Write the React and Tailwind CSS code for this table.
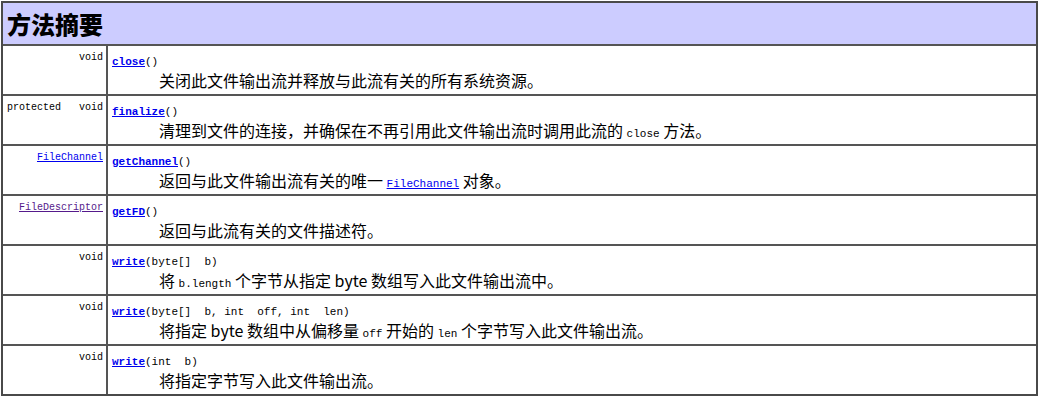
const MONO = "font-['Liberation_Mono','DejaVu_Sans_Mono',monospace]";

function Code({ children }) {
  return <span className={`${MONO} text-[11px]`}>{children}</span>;
}

const rows = [
  {
    left: 'void',
    name: 'close',
    params: '()',
    desc: <>关闭此文件输出流并释放与此流有关的所有系统资源。</>,
  },
  {
    left: 'protected   void',
    name: 'finalize',
    params: '()',
    desc: (
      <>
        清理到文件的连接，并确保在不再引用此文件输出流时调用此流的 <Code>close</Code> 方法。
      </>
    ),
  },
  {
    left: <a className="text-[#0000ee] underline">FileChannel</a>,
    name: 'getChannel',
    params: '()',
    desc: (
      <>
        返回与此文件输出流有关的唯一 <a className={`${MONO} text-[11px] text-[#0000ee] underline`}>FileChannel</a> 对象。
      </>
    ),
  },
  {
    left: <a className="text-[#551a8b] underline">FileDescriptor</a>,
    name: 'getFD',
    params: '()',
    desc: <>返回与此流有关的文件描述符。</>,
  },
  {
    left: 'void',
    name: 'write',
    params: '(byte[]  b)',
    desc: (
      <>
        将 <Code>b.length</Code> 个字节从指定 byte 数组写入此文件输出流中。
      </>
    ),
  },
  {
    left: 'void',
    name: 'write',
    params: '(byte[]  b, int  off, int  len)',
    desc: (
      <>
        将指定 byte 数组中从偏移量 <Code>off</Code> 开始的 <Code>len</Code> 个字节写入此文件输出流。
      </>
    ),
  },
  {
    left: 'void',
    name: 'write',
    params: '(int  b)',
    desc: <>将指定字节写入此文件输出流。</>,
  },
];

export default function App() {
  return (
    <div className="bg-white w-[1039px] h-[397px] pt-px pl-px font-['Noto_Sans_CJK_SC',sans-serif] text-black">
      <div className="w-[1037px] border-2 border-[#4a4a4a] flex flex-col">
        <div className="h-[41px] bg-[#ccccff] flex items-center pl-[4px] text-[24px] leading-none font-black">
          方法摘要
        </div>
        {rows.map((r, i) => (
          <div key={i} className="h-[50px] border-t-2 border-[#555555] flex">
            <div
              className={`w-[103px] shrink-0 text-right pr-[3px] pt-[6px] ${MONO} text-[10px] leading-[12px] whitespace-pre`}
            >
              {r.left}
            </div>
            <div className="flex-1 border-l-2 border-[#555555] pl-[4px] pt-[9px]">
              <div className={`${MONO} text-[11px] leading-[14px] whitespace-pre`}>
                <a className="font-bold text-[#0000ee] underline">{r.name}</a>
                {r.params}
              </div>
              <div className="pl-[47px] text-[16px] leading-[22px] whitespace-nowrap">{r.desc}</div>
            </div>
          </div>
        ))}
      </div>
    </div>
  );
}
